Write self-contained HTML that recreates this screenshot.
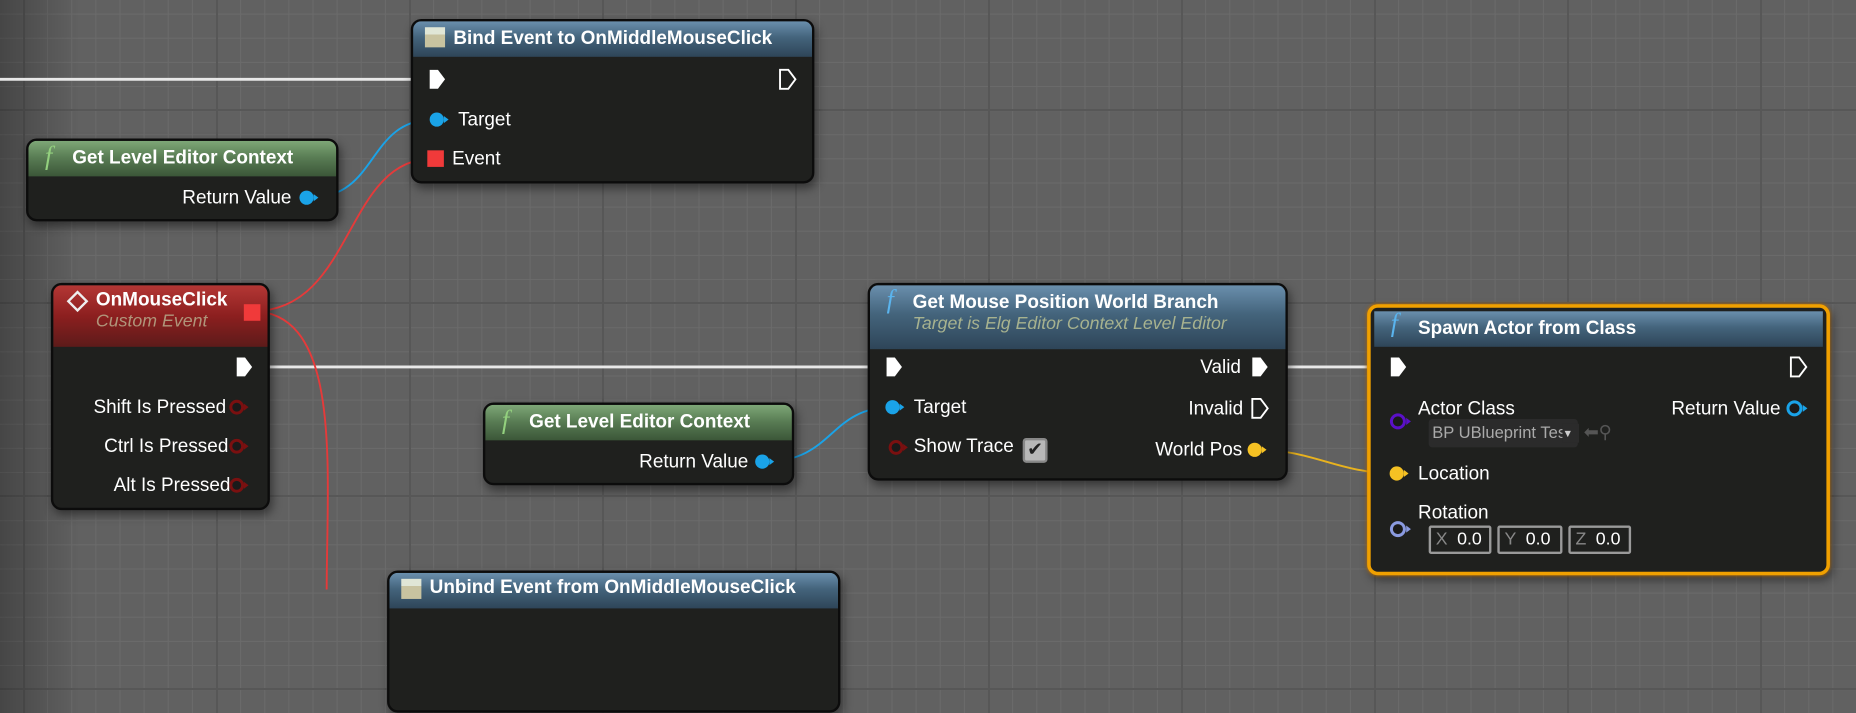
<!DOCTYPE html>
<html><head><meta charset="utf-8"><style>
*{margin:0;padding:0;box-sizing:border-box}
body{width:1856px;height:589px;overflow:hidden;position:relative;font-family:"Liberation Sans",sans-serif;color:#fff;
background-color:#616161;
background-image:
linear-gradient(90deg,rgba(0,0,0,.28),rgba(0,0,0,0) 80px),
linear-gradient(90deg,#575757 0,#575757 2px,transparent 2px),
linear-gradient(0deg,#575757 0,#575757 2px,transparent 2px),
linear-gradient(90deg,#6b6b6b 0,#6b6b6b 1px,transparent 1px),
linear-gradient(0deg,#6b6b6b 0,#6b6b6b 1px,transparent 1px);
background-size:100% 100%,193px 193px,193px 193px,24.125px 24.125px,24.125px 24.125px;
background-position:0 0,23px 0,0 111px,23px 0,0 14.6px;}
.s{position:absolute;left:0;top:0;width:1568px;height:498px;transform:scale(1.18367);transform-origin:0 0}
.n{position:absolute;background:#1f201e;border:2px solid #0c0c0c;border-radius:9px;box-shadow:2px 4px 8px rgba(0,0,0,.45);overflow:hidden}
.h{position:absolute;left:0;right:0;top:0;padding-left:34px;font-weight:bold;font-size:16px;line-height:26px}
.blue{background:linear-gradient(180deg,#6a8fad 0,#44647c 45%,#2e4558 100%)}
.green{background:linear-gradient(180deg,#7ea777 0,#5a7e55 45%,#3b5638 100%)}
.red{background:linear-gradient(180deg,#b43735 0,#8c1f1f 50%,#5d1b1a 100%)}
.sub{font-style:italic;font-weight:normal;color:#a7b28f;font-size:15px;line-height:18px}
.t{position:absolute;font-size:16px;line-height:18px;white-space:nowrap}
.f{position:absolute;font-family:"Liberation Serif",serif;font-style:italic;font-size:22px;font-weight:normal}
svg.w{position:absolute;left:0;top:0}
.box{position:absolute;border:2px solid #9a9a9a;border-radius:2px;height:24px;font-size:15px;line-height:20px;color:#fff}
.box span{color:#888;margin:0 8px 0 4px}
</style></head><body>
<div class="s">
<svg class="w" width="1568" height="498">
<g fill="none" stroke-width="2.5">
<path d="M0 67 L362 67" stroke="#e8e8e8"/>
<path d="M215 310 L750 310" stroke="#e8e8e8"/>
<path d="M1072 310 L1175 310" stroke="#e8e8e8"/>
</g>
<g fill="none" stroke-width="1.6">
<path d="M262 167 C320 167 310 101 366 101" stroke="#1aa3e8"/>
<path d="M213 263 C300 263 290 134 366 134" stroke="#e53a3a"/>
<path d="M213 263 C290 263 276 400 276 498" stroke="#e53a3a"/>
<path d="M646 390 C705 390 700 344 754 344" stroke="#1aa3e8"/>
<path d="M1062 380 C1110 380 1130 400 1180 400" stroke="#e8b21e"/>
</g>
</svg>

<div class="n" style="left:347px;top:16px;width:341px;height:139px">
<div class="h blue" style="height:30px;line-height:30px">Bind Event to OnMiddleMouseClick</div>
</div>
<div style="position:absolute;left:359px;top:23px;width:17px;height:17px;background:linear-gradient(#e0e6d6 0 35%,#c8c3a0 35%)"></div>

<div class="n" style="left:22px;top:117px;width:264px;height:70px">
<div class="h green" style="height:30px;line-height:30px;padding-left:37px">Get Level Editor Context</div>
</div>
<div class="f" style="left:38px;top:119px;color:#93d07e">f</div>
<div class="t" style="left:154px;top:159px">Return Value</div>

<div class="n" style="left:43px;top:239px;width:185px;height:192px">
<div class="h red" style="height:52px;padding-left:36px;padding-top:4px;line-height:18px">OnMouseClick<div class="sub" style="color:#b0957a">Custom Event</div></div>
</div>
<div style="position:absolute;left:59px;top:248px;width:13px;height:13px;border:2px solid #eee;transform:rotate(45deg)"></div>
<div style="position:absolute;left:206px;top:257px;width:14px;height:14px;background:#f03a3a"></div>
<div class="t" style="left:79px;top:336px">Shift Is Pressed</div>
<div class="t" style="left:88px;top:369px">Ctrl Is Pressed</div>
<div class="t" style="left:96px;top:402px">Alt Is Pressed</div>

<div class="n" style="left:733px;top:239px;width:355px;height:167px">
<div class="h blue" style="height:54px;padding-left:36px;padding-top:6px;line-height:18px">Get Mouse Position World Branch<div class="sub">Target is Elg Editor Context Level Editor</div></div>
</div>
<div class="f" style="left:749px;top:240px;color:#5ab4ee">f</div>
<div class="t" style="left:772px;top:336px">Target</div>
<div class="t" style="left:772px;top:369px">Show Trace</div>
<div style="position:absolute;left:864px;top:370px;width:21px;height:21px;background:#b8b8b8;border:2px solid #888;border-radius:3px;color:#222;font-size:16px;line-height:17px;text-align:center">✔</div>
<div class="t" style="left:1014px;top:302px">Valid</div>
<div class="t" style="left:1004px;top:337px">Invalid</div>
<div class="t" style="left:976px;top:372px">World Pos</div>

<div class="n" style="left:408px;top:340px;width:263px;height:70px">
<div class="h green" style="height:30px;line-height:30px;padding-left:37px">Get Level Editor Context</div>
</div>
<div class="f" style="left:424px;top:342px;color:#93d07e">f</div>
<div class="t" style="left:540px;top:382px">Return Value</div>

<div class="n" style="left:1155px;top:257px;width:391px;height:229px;border:3px solid #f0a000;box-shadow:0 0 3px #c07000,2px 4px 8px rgba(0,0,0,.45)">
<div class="h blue" style="left:3px;right:3px;top:3px;height:30px;line-height:30px;padding-left:37px">Spawn Actor from Class</div>
</div>
<div class="f" style="left:1175px;top:260px;color:#5ab4ee">f</div>
<div class="t" style="left:1198px;top:337px">Actor Class</div>
<div style="position:absolute;left:1207px;top:354px;width:126px;height:24px;background:#2b2b2b;border-radius:3px;color:#aaa;font-size:14px;line-height:22px;padding-left:3px;overflow:hidden;white-space:nowrap">BP UBlueprint Test</div>
<div style="position:absolute;left:1320px;top:358px;width:14px;height:16px;background:#2b2b2b;color:#ccc;font-size:9px;line-height:16px">▼</div>
<div style="position:absolute;left:1338px;top:356px;color:#555;font-size:15px">⬅⚲</div>
<div class="t" style="left:1412px;top:337px">Return Value</div>
<div class="t" style="left:1198px;top:392px">Location</div>
<div class="t" style="left:1198px;top:425px">Rotation</div>
<div class="box" style="left:1207px;top:444px;width:53px"><span>X</span>0.0</div>
<div class="box" style="left:1265px;top:444px;width:55px"><span>Y</span>0.0</div>
<div class="box" style="left:1325px;top:444px;width:53px"><span>Z</span>0.0</div>

<div class="n" style="left:327px;top:482px;width:383px;height:120px">
<div class="h blue" style="height:30px;line-height:26px">Unbind Event from OnMiddleMouseClick</div>
</div>
<div style="position:absolute;left:339px;top:489px;width:17px;height:17px;background:linear-gradient(#e0e6d6 0 35%,#c8c3a0 35%)"></div>

<svg class="w" width="1568" height="498">
<defs>
<g id="ex"><path d="M-6 -8 H1 L7 0 L1 8 H-6 Z"/></g>
<g id="dp"><circle r="6"/><path d="M6 -3 L10 0 L6 3Z"/></g>
</defs>
<g fill="#fff">
<use href="#ex" x="369" y="67"/>
<use href="#ex" x="206" y="310"/>
<use href="#ex" x="755" y="310"/>
<use href="#ex" x="1064" y="310"/>
<use href="#ex" x="1181" y="310"/>
</g>
<g fill="none" stroke="#fff" stroke-width="1.6">
<use href="#ex" x="665" y="67"/>
<use href="#ex" x="1064" y="345"/>
<use href="#ex" x="1519" y="310"/>
</g>
<g fill="#1aa3e8">
<use href="#dp" x="369" y="101"/>
<use href="#dp" x="259" y="167"/>
<use href="#dp" x="754" y="344"/>
<use href="#dp" x="644" y="390"/>
</g>
<rect x="361" y="127" width="14" height="14" fill="#f03a3a"/>
<g fill="#1a1a1a" stroke="#7a1010" stroke-width="2.5">
<circle cx="200" cy="344" r="5"/><circle cx="200" cy="377" r="5"/><circle cx="200" cy="410" r="5"/>
<circle cx="757" cy="378" r="5"/>
</g>
<g fill="#7a1010"><path d="M206 341 L210 344 L206 347Z"/><path d="M206 374 L210 377 L206 380Z"/><path d="M206 407 L210 410 L206 413Z"/><path d="M763 375 L767 378 L763 381Z"/></g>
<g fill="#f5c123">
<use href="#dp" x="1060" y="380"/>
<use href="#dp" x="1180" y="400"/>
</g>
<g fill="#1a1a1a" stroke-width="2.5">
<circle cx="1181" cy="356" r="5.5" stroke="#5a10c8"/>
<circle cx="1181" cy="447" r="5.5" stroke="#8a9ae0"/>
<circle cx="1516" cy="345" r="5.5" stroke="#1aa3e8"/>
</g>
<path d="M1188 353 L1192 356 L1188 359Z" fill="#5a10c8"/>
<path d="M1188 444 L1192 447 L1188 450Z" fill="#8a9ae0"/>
<path d="M1523 342 L1527 345 L1523 348Z" fill="#1aa3e8"/>
</svg>

<div class="t" style="left:387px;top:93px">Target</div>
<div class="t" style="left:382px;top:126px">Event</div>
</div>
</body></html>
